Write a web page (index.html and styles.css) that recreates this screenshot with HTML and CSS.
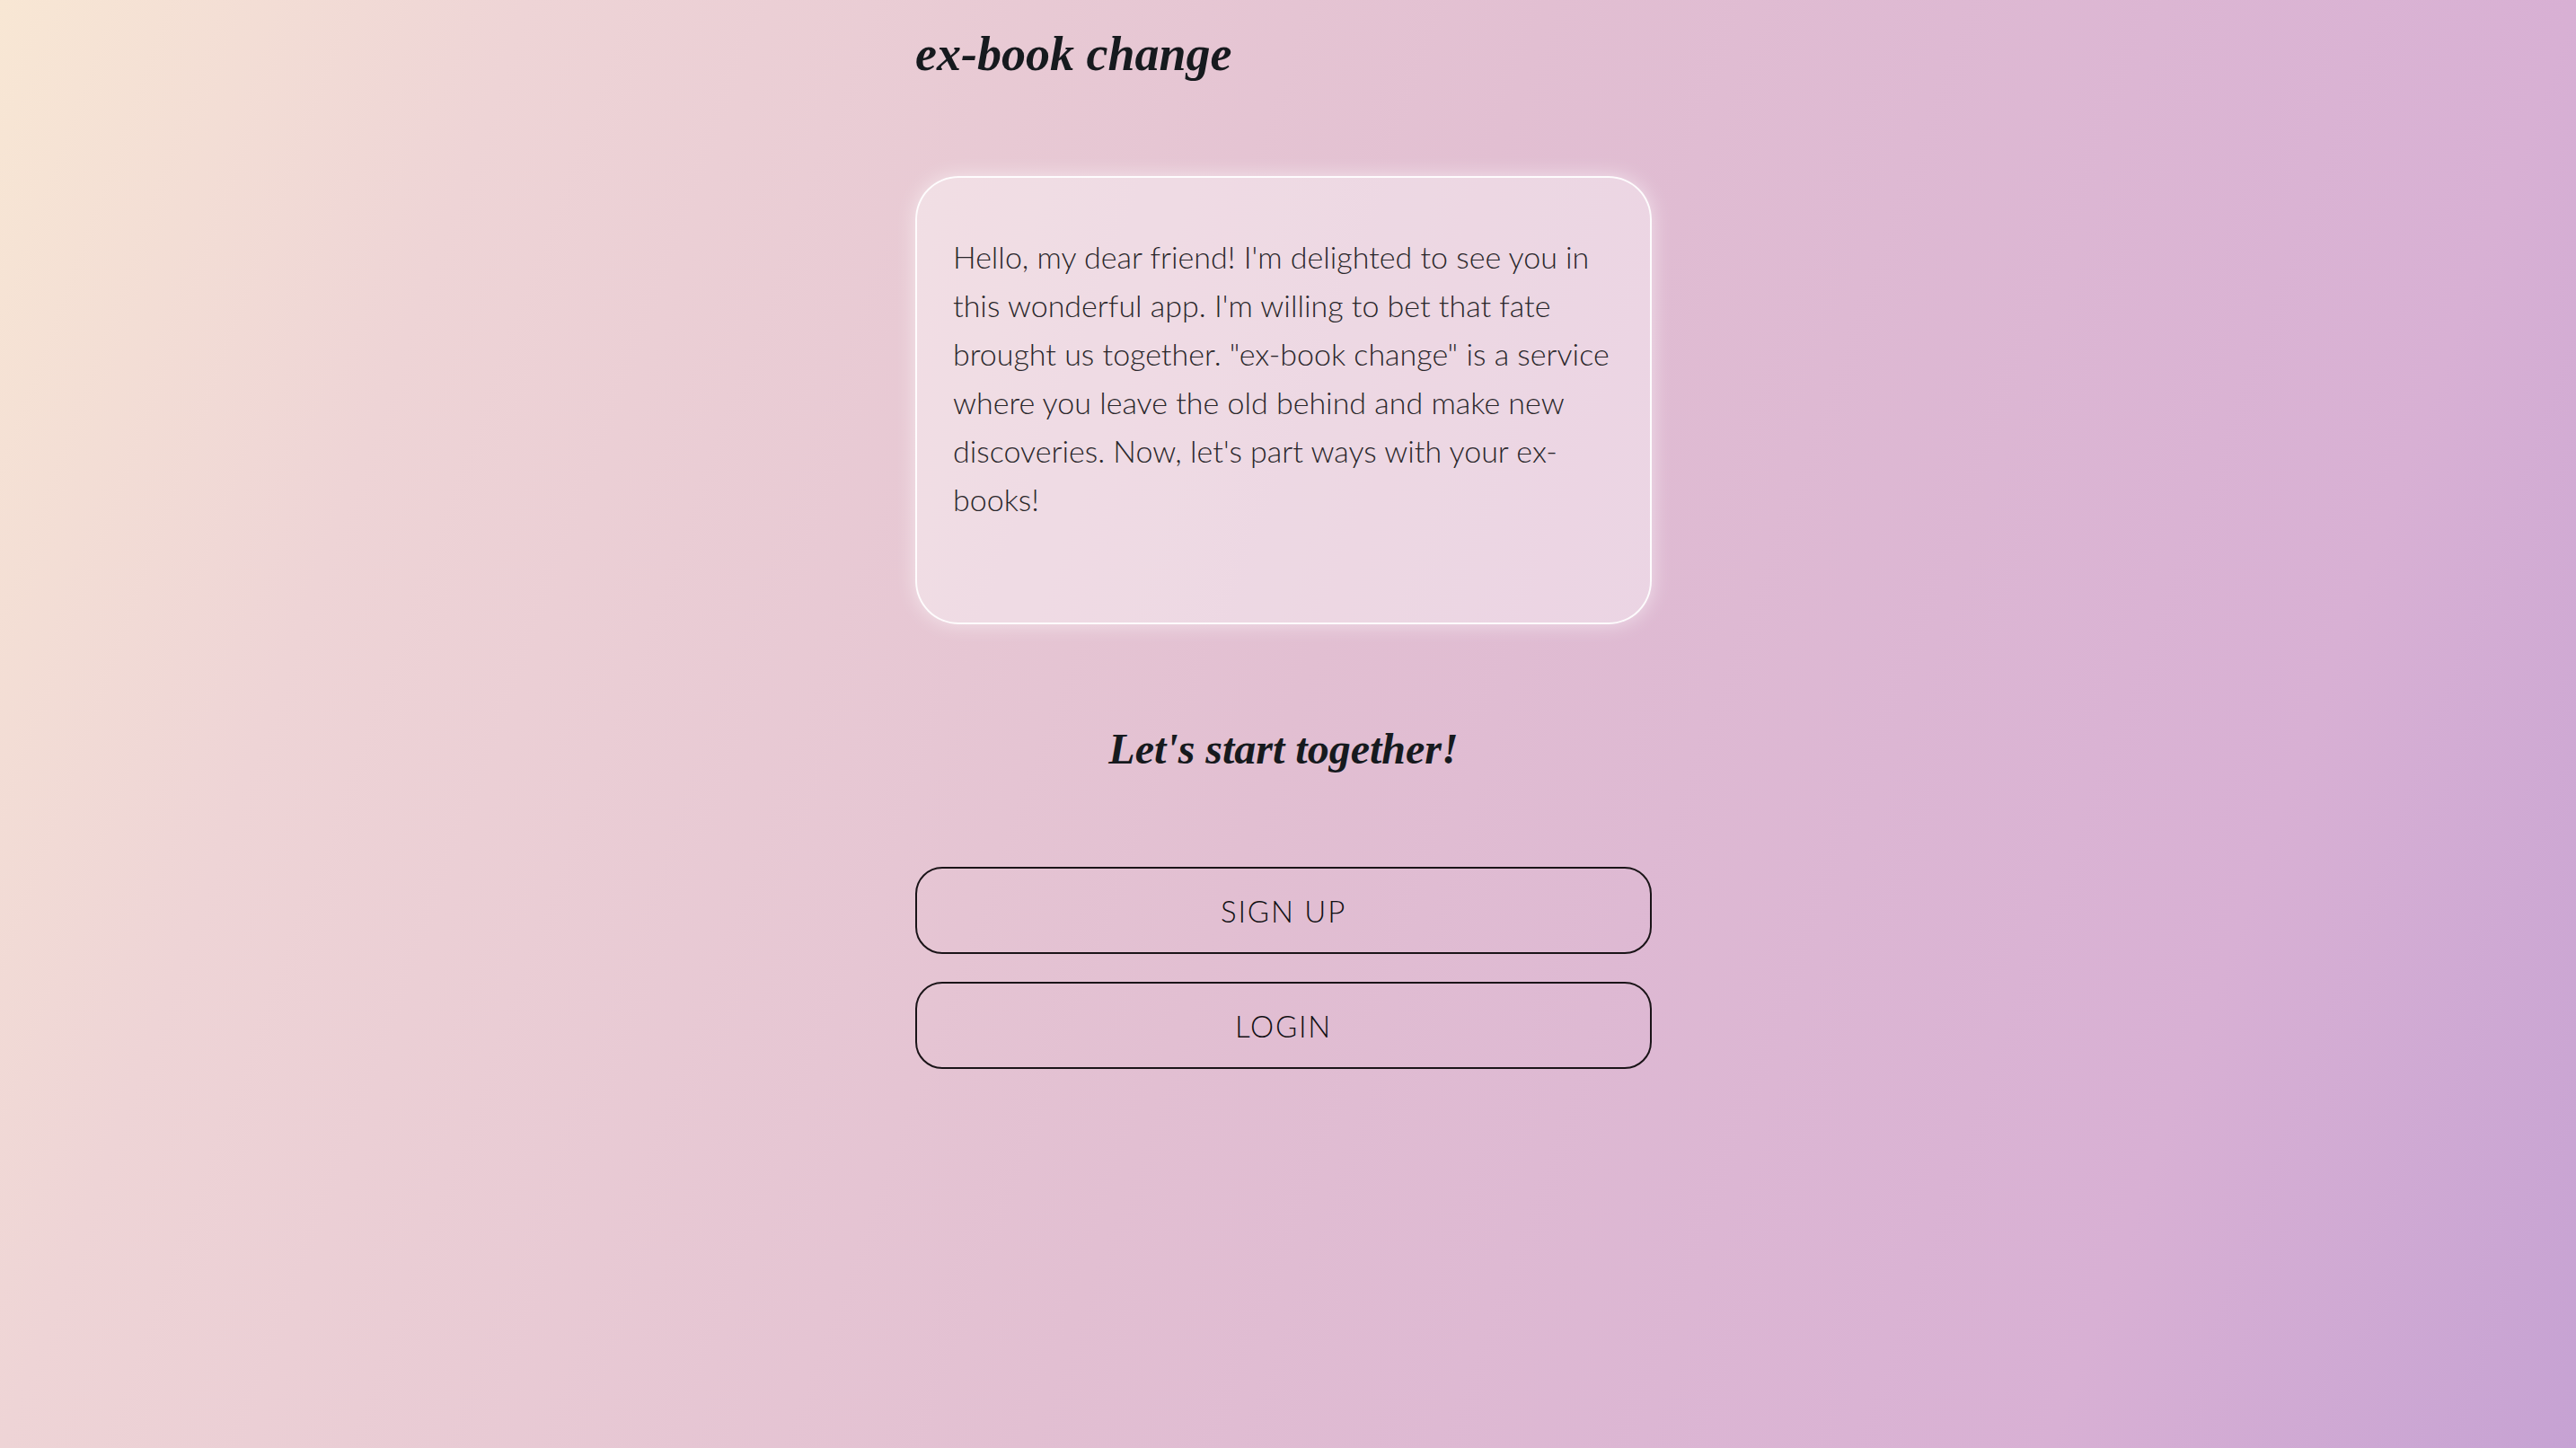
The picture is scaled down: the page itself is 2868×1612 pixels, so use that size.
FILE: index.html
```html
<!DOCTYPE html>
<html lang="en">
<head>
<meta charset="utf-8">
<title>ex-book change</title>
<link rel="stylesheet" href="styles.css">
</head>
<body>
<main class="page">
  <h1 class="logo">ex-book change</h1>
  <section class="intro-card">
    <p class="intro-text">Hello, my dear friend! I'm delighted to see you in this wonderful app. I'm willing to bet that fate brought us together. "ex-book change" is a service where you leave the old behind and make new discoveries. Now, let's part ways with your ex-books!</p>
  </section>
  <h2 class="tagline">Let's start together!</h2>
  <div class="actions">
    <button class="action-btn" type="button">SIGN UP</button>
    <button class="action-btn" type="button">LOGIN</button>
  </div>
</main>
</body>
</html>
```
FILE: styles.css
```css
* { box-sizing: border-box; }
html, body { height: 100%; }
body {
  margin: 0;
  min-height: 100vh;
  background: linear-gradient(110deg, #f8e7d4 0%, #eed4d6 17%, #e2bfd2 50%, #d8b0d4 83%, #c6a2d3 100%);
  font-family: "Lato", "Open Sans", sans-serif;
  color: #1b1b1f;
}
.page {
  width: 820px;
  margin-left: calc(50% - 415px);
  display: flex;
  flex-direction: column;
}
.logo {
  margin: 0;
  padding-top: 26px;
  font-family: "Liberation Serif", serif;
  font-style: italic;
  font-weight: 700;
  font-size: 54px;
  line-height: 68px;
  color: #161a1e;
}
.intro-card {
  margin-top: 102px;
  height: 499px;
  padding: 61px 40px 0 40px;
  border: 2px solid rgba(255,255,255,0.9);
  border-radius: 48px;
  background: rgba(255,255,255,0.38);
  box-shadow: 0 0 22px rgba(255,255,255,0.55);
}
.intro-text {
  margin: 0;
  font-family: "Lato", sans-serif;
  font-weight: 300;
  font-size: 34px;
  line-height: 54px;
  color: #2a272b;
}
.tagline {
  margin: 110px 0 0;
  text-align: center;
  font-family: "Liberation Serif", serif;
  font-style: italic;
  font-weight: 700;
  font-size: 48px;
  line-height: 58px;
  color: #161a1e;
}
.actions {
  margin-top: 102px;
  display: flex;
  flex-direction: column;
  gap: 31px;
}
.action-btn {
  height: 97px;
  border: 2px solid #1a1418;
  border-radius: 30px;
  background: transparent;
  font-family: "Lato", sans-serif;
  font-weight: 300;
  font-size: 33px;
  letter-spacing: 1.8px;
  color: #111013;
}
```
